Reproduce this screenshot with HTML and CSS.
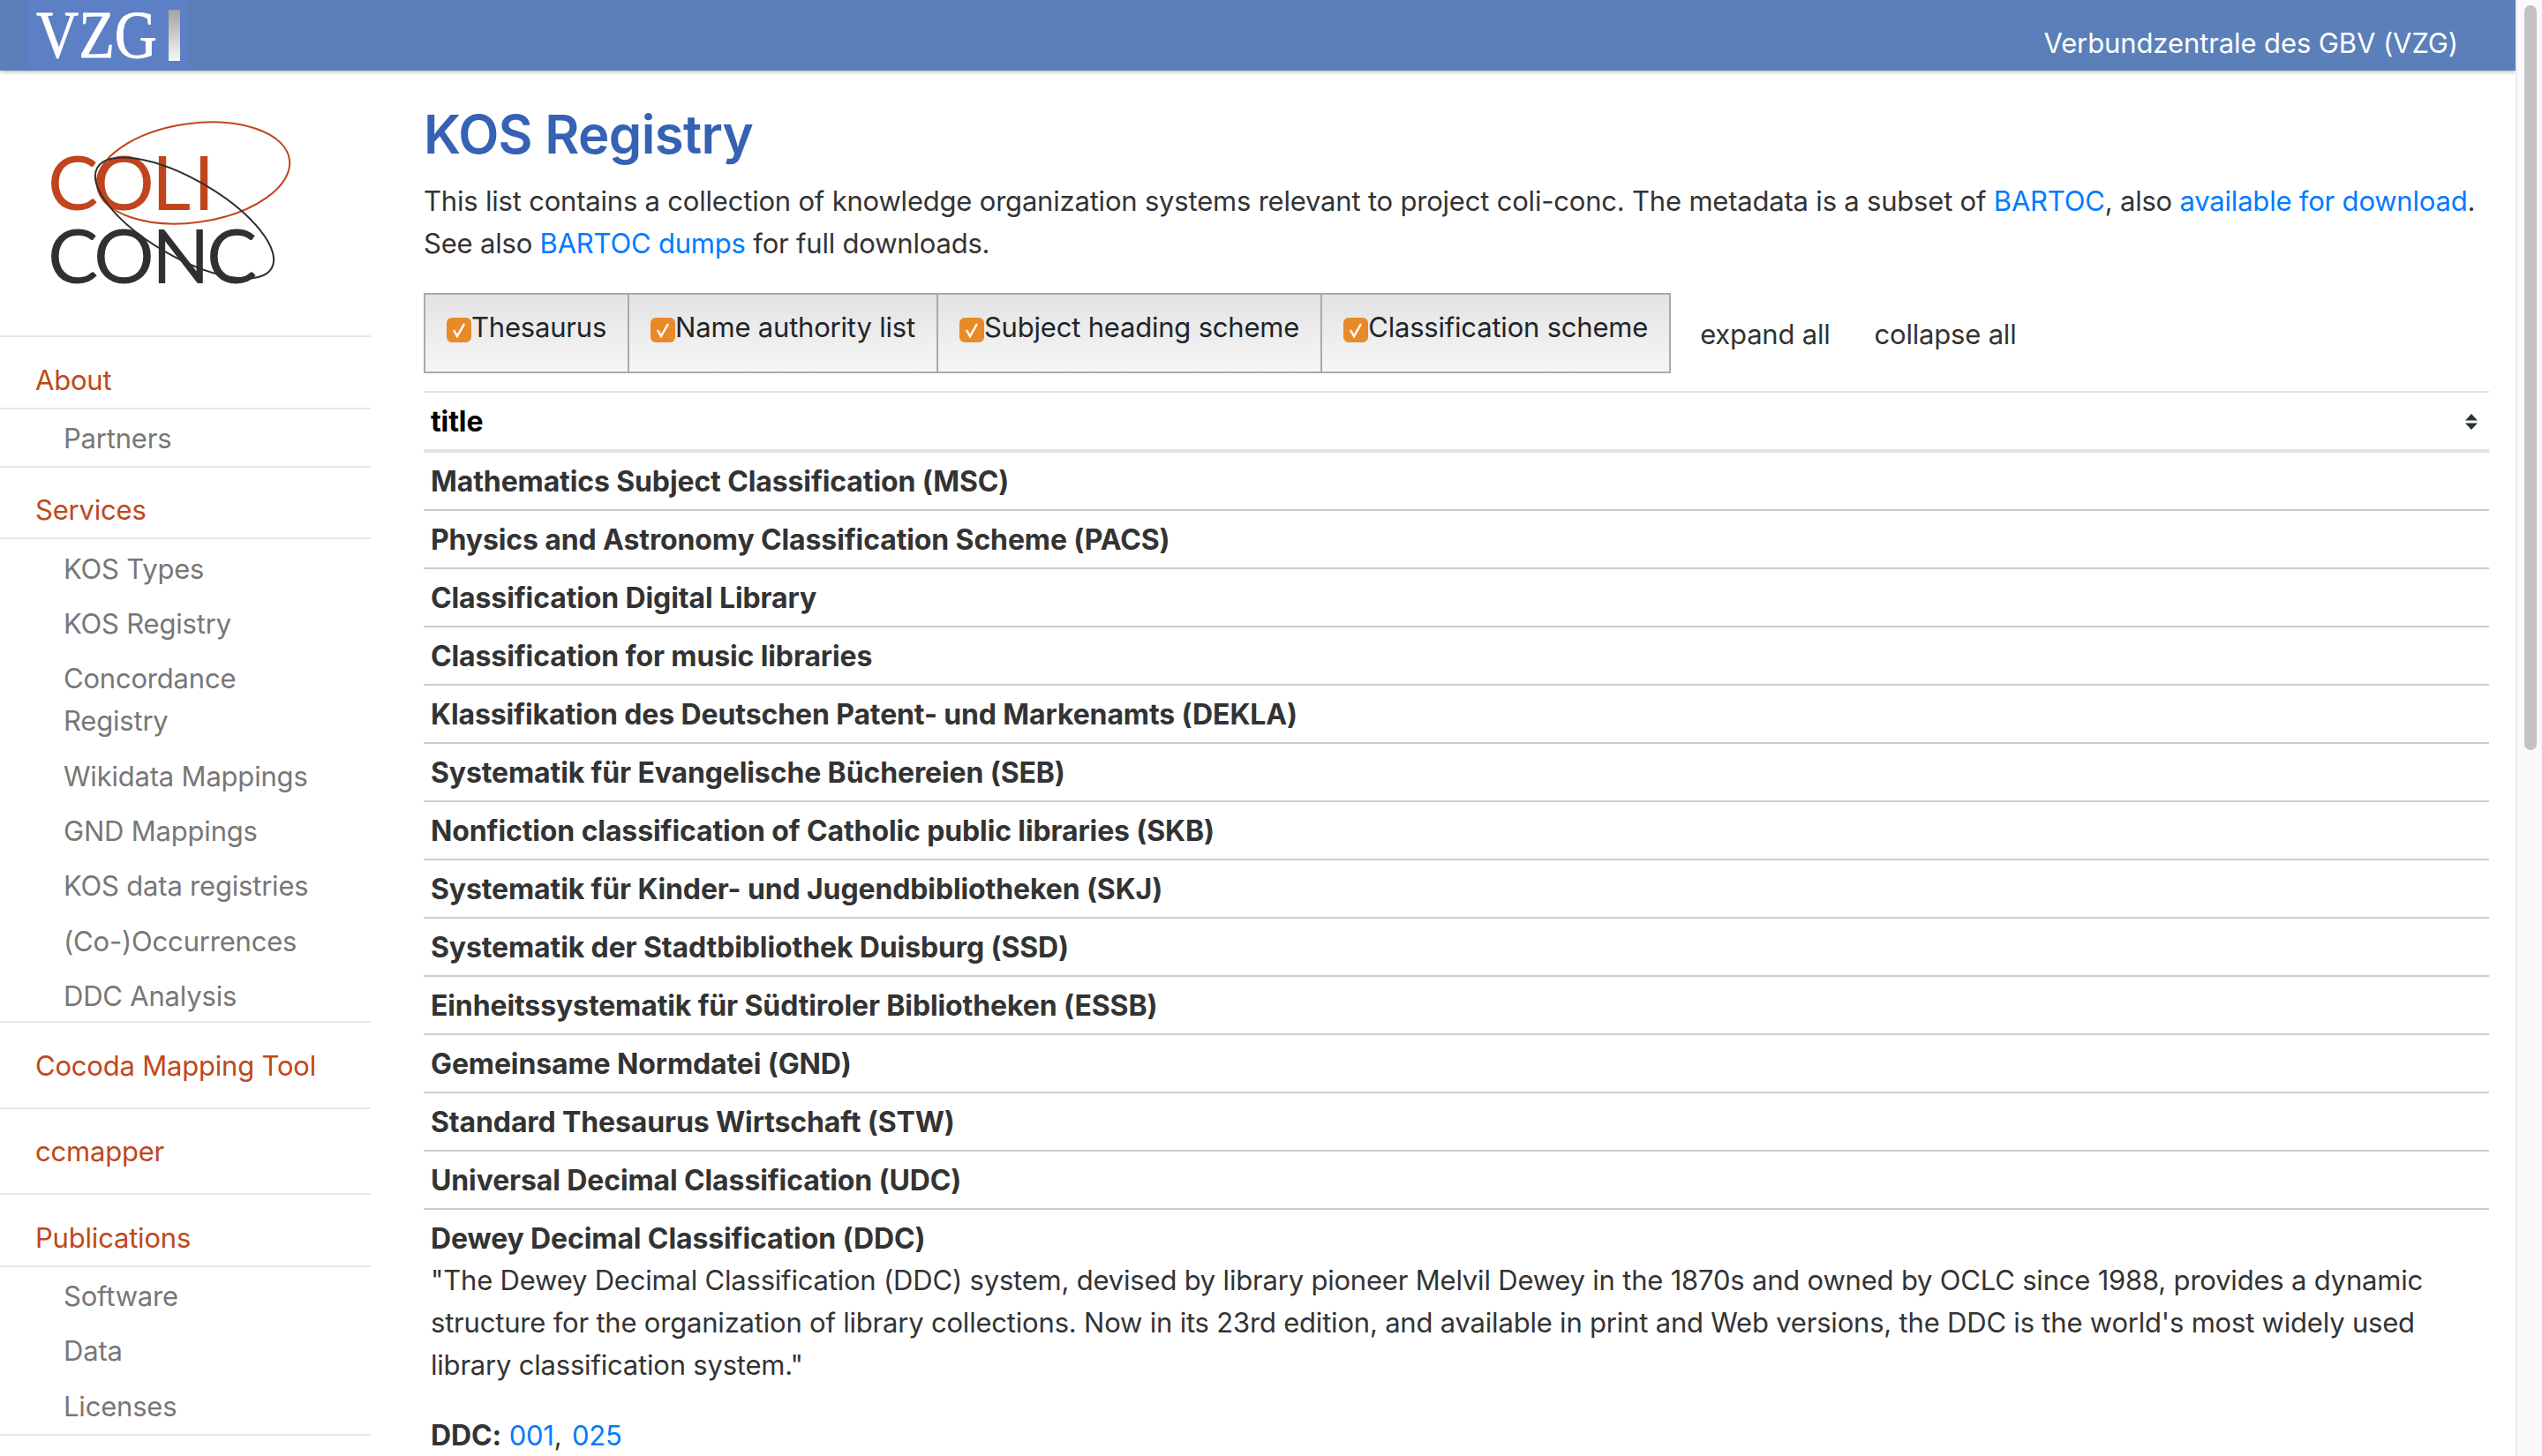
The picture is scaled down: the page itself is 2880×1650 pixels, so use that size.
FILE: index.html
```html
<!DOCTYPE html>
<html>
    <head>
        <title> KOS Registry </title>
        <link rel="stylesheet" href="styles.css">
    </head>
    <body>
        <div class="page">
            <header class="topbar">
                <a class="vzg-logo" href="#">
                    <svg width="181" height="80" viewBox="0 0 181 80">
                        <defs>
                            <linearGradient id="barfade" x1="0" y1="0" x2="0" y2="1">
                                <stop offset="0" stop-color="#a3a3a3"/>
                                <stop offset="1" stop-color="#f7f7f7"/>
                            </linearGradient>
                        </defs>
                        <text x="9" y="65" class="vzg-text" textLength="137" lengthAdjust="spacingAndGlyphs">VZG</text>
                        <rect x="159" y="11" width="13" height="58" fill="url(#barfade)"/>
                    </svg>
                </a>
                <span class="topbar-title">Verbundzentrale des GBV (VZG)</span>
            </header>

            <div class="columns">
                <nav class="sidebar">
                    <a class="coli-logo" href="#">
                        <svg width="420" height="300" viewBox="0 0 420 300">
                            <text x="54 106 172 219" y="158" class="coli-text">COLI</text>
                            <text x="54 106 172 234" y="241" class="conc-text">CONC</text>
                            <ellipse cx="219" cy="116" rx="110" ry="56" transform="rotate(-8 219 116)" class="ring-red"/>
                            <ellipse cx="209" cy="167" rx="114" ry="44" transform="rotate(30 209 167)" class="ring-dark"/>
                        </svg>
                    </a>

                    <div class="nav-section">
                        <a class="nav-head has-sub" href="#">About</a>
                        <ul class="nav-sub">
                            <li><a href="#">Partners</a></li>
                        </ul>
                    </div>
                    <div class="nav-section">
                        <a class="nav-head has-sub" href="#">Services</a>
                        <ul class="nav-sub nav-sub-long">
                            <li><a href="#">KOS Types</a></li>
                            <li><a href="#">KOS Registry</a></li>
                            <li><a href="#">Concordance Registry</a></li>
                            <li><a href="#">Wikidata Mappings</a></li>
                            <li><a href="#">GND Mappings</a></li>
                            <li><a href="#">KOS data registries</a></li>
                            <li><a href="#">(Co-)Occurrences</a></li>
                            <li><a href="#">DDC Analysis</a></li>
                        </ul>
                    </div>
                    <div class="nav-section">
                        <a class="nav-head" href="#">Cocoda Mapping Tool</a>
                    </div>
                    <div class="nav-section">
                        <a class="nav-head" href="#">ccmapper</a>
                    </div>
                    <div class="nav-section">
                        <a class="nav-head has-sub" href="#">Publications</a>
                        <ul class="nav-sub">
                            <li><a href="#">Software</a></li>
                            <li><a href="#">Data</a></li>
                            <li><a href="#">Licenses</a></li>
                        </ul>
                    </div>
                </nav>

                <main class="content">
                    <h1>KOS Registry</h1>
                    <p class="intro">This list contains a collection of knowledge organization systems relevant to project coli-conc. The metadata is a subset of <a href="#">BARTOC</a>, also <a href="#">available for download</a>. See also <a href="#">BARTOC dumps</a> for full downloads.</p>

                    <div class="toolbar">
                        <div class="filters">
                            <label class="filter"><span class="check"><svg width="28" height="28" viewBox="0 0 28 28"><path d="M8 14 L12 21 L20 7" class="tick"/></svg></span>Thesaurus</label>
                            <label class="filter"><span class="check"><svg width="28" height="28" viewBox="0 0 28 28"><path d="M8 14 L12 21 L20 7" class="tick"/></svg></span>Name authority list</label>
                            <label class="filter"><span class="check"><svg width="28" height="28" viewBox="0 0 28 28"><path d="M8 14 L12 21 L20 7" class="tick"/></svg></span>Subject heading scheme</label>
                            <label class="filter"><span class="check"><svg width="28" height="28" viewBox="0 0 28 28"><path d="M8 14 L12 21 L20 7" class="tick"/></svg></span>Classification scheme</label>
                        </div>
                        <a class="tool-link" href="#">expand all</a>
                        <a class="tool-link" href="#">collapse all</a>
                    </div>

                    <table class="kos-table">
                        <thead>
                            <tr>
                                <th>
                                    <div class="th-inner">
                                        title
                                        <svg width="16" height="18" viewBox="0 0 16 18"><path d="M8 0 L15 7.5 L1 7.5 Z M1 10.5 L15 10.5 L8 18 Z" fill="#2b3338"/></svg>
                                    </div>
                                </th>
                            </tr>
                        </thead>
                        <tbody>
                            <tr><td><b>Mathematics Subject Classification (MSC)</b></td></tr>
                            <tr><td><b>Physics and Astronomy Classification Scheme (PACS)</b></td></tr>
                            <tr><td><b>Classification Digital Library</b></td></tr>
                            <tr><td><b>Classification for music libraries</b></td></tr>
                            <tr><td><b>Klassifikation des Deutschen Patent- und Markenamts (DEKLA)</b></td></tr>
                            <tr><td><b>Systematik für Evangelische Büchereien (SEB)</b></td></tr>
                            <tr><td><b>Nonfiction classification of Catholic public libraries (SKB)</b></td></tr>
                            <tr><td><b>Systematik für Kinder- und Jugendbibliotheken (SKJ)</b></td></tr>
                            <tr><td><b>Systematik der Stadtbibliothek Duisburg (SSD)</b></td></tr>
                            <tr><td><b>Einheitssystematik für Südtiroler Bibliotheken (ESSB)</b></td></tr>
                            <tr><td><b>Gemeinsame Normdatei (GND)</b></td></tr>
                            <tr><td><b>Standard Thesaurus Wirtschaft (STW)</b></td></tr>
                            <tr><td><b>Universal Decimal Classification (UDC)</b></td></tr>
                            <tr>
                                <td>
                                    <b>Dewey Decimal Classification (DDC)</b>
                                    <p class="desc">"The Dewey Decimal Classification (DDC) system, devised by library pioneer Melvil Dewey in the 1870s and owned by OCLC since 1988, provides a dynamic structure for the organization of library collections. Now in its 23rd edition, and available in print and Web versions, the DDC is the world's most widely used library classification system."</p>
                                    <p class="desc-meta"><b>DDC:</b> <a href="#">001</a>, <a href="#">025</a></p>
                                </td>
                            </tr>
                        </tbody>
                    </table>
                </main>
            </div>
        </div>

        <div class="scrollbar"><div class="scroll-thumb"></div></div>
    </body>
</html>
```

FILE: styles.css
```css
html, body {
    height: 100%;
    margin: 0;
    overflow: hidden;
}

body {
    display: flex;
    font-family: Inter, "Noto Sans", sans-serif;
    font-size: 31px;
    letter-spacing: -0.2px;
    line-height: 48px;
    color: #333;
    background-color: #fff;
}

a {
    text-decoration: none;
    color: #007bff;
}

.page {
    flex: 1;
    min-width: 0;
    height: 100%;
    overflow: hidden;
}

/* top bar */
.topbar {
    display: flex;
    justify-content: space-between;
    align-items: center;
    height: 80px;
    padding: 0 65px 0 32px;
    background-color: #5a7fb9;
    box-shadow: 0 2px 4px rgba(0, 0, 0, 0.25);
    position: relative;
}

.vzg-logo {
    display: block;
    height: 80px;
    background-color: #5c7fc5;
}

.vzg-text {
    font-family: "Liberation Serif", serif;
    font-size: 76px;
    letter-spacing: 0;
    fill: #fff;
    stroke: #fff;
    stroke-width: 0.8;
}

.topbar-title {
    color: #fff;
    letter-spacing: -0.1px;
    padding-top: 17px;
}

.columns {
    display: flex;
}

/* sidebar */
.sidebar {
    flex: 0 0 420px;
    margin-right: 60px;
}

.coli-logo {
    display: block;
    height: 300px;
    border-bottom: 2px solid #e7e7e7;
}

.coli-text {
    font-family: Lato, sans-serif;
    font-size: 86px;
    letter-spacing: 0;
    fill: #c0451d;
}

.conc-text {
    font-family: Lato, sans-serif;
    font-size: 86px;
    letter-spacing: 0;
    fill: #2e3032;
}

.ring-red {
    fill: none;
    stroke: #c0451d;
    stroke-width: 2;
}

.ring-dark {
    fill: none;
    stroke: #2e3032;
    stroke-width: 2;
}

.nav-section {
    border-bottom: 2px solid #e7e7e7;
}

.nav-head {
    display: block;
    padding: 24.5px 0 23px 40px;
    color: #c0481a;
}

.nav-head.has-sub {
    padding-bottom: 7px;
    border-bottom: 2px solid #e7e7e7;
}

.nav-sub {
    list-style: none;
    margin: 0;
    padding: 2px 0 0;
}

.nav-sub li a {
    display: block;
    padding: 7.2px 40px 7.2px 72px;
    color: #777;
}

.nav-sub-long li:last-child a {
    padding-bottom: 4px;
}

/* main column */
.content {
    flex: 1;
    min-width: 0;
    padding-right: 30px;
}

h1 {
    margin: 36px 0 16px;
    font-size: 60px;
    line-height: 72px;
    font-weight: 600;
    letter-spacing: -0.7px;
    color: #3562b3;
}

.intro {
    margin: 0 0 32px;
}

.toolbar {
    display: flex;
    align-items: center;
}

.filters {
    display: flex;
    height: 91px;
    box-sizing: border-box;
    border: 2px solid #aaa;
    background: linear-gradient(#e3e3e3, #f6f6f6);
    margin-right: 33px;
}

.filter {
    display: flex;
    align-items: flex-start;
    padding: 13px 24px 0;
    border-left: 2px solid #aaa;
    color: #212529;
}

.filter:first-child {
    border-left: none;
}

.check {
    display: block;
    width: 28px;
    height: 28px;
    margin-top: 13px;
    border-radius: 6px;
    background-color: #e98a28;
}

.check svg {
    display: block;
}

.tick {
    fill: none;
    stroke: #fff;
    stroke-width: 2.5;
}

.tool-link {
    color: #333;
    margin-right: 50px;
    padding-top: 3px;
}

.kos-table {
    width: 100%;
    margin-top: 20px;
    border-spacing: 0;
}

.kos-table th {
    padding: 9px 8px 7px;
    text-align: left;
    color: #000;
    font-size: 32px;
    font-weight: 700;
    letter-spacing: -0.12px;
    border-top: 2px solid #dee2e6;
    border-bottom: 4px solid #dee2e6;
}

.th-inner {
    display: flex;
    justify-content: space-between;
    align-items: center;
    padding-right: 4px;
}

.kos-table td {
    padding: 9px 8px 7px;
    border-bottom: 2px solid #ccc;
}

.kos-table td b {
    font-size: 32px;
    font-weight: 700;
    letter-spacing: -0.12px;
}

.desc {
    margin: -1px 0 32px;
}

.desc-meta {
    margin: 0;
}

.desc-meta a + a {
    margin-left: 3px;
}

/* fake scrollbar */
.scrollbar {
    flex: 0 0 30px;
    height: 100%;
    box-sizing: border-box;
    background-color: #fafafa;
    border-left: 2px solid #ececec;
    padding: 6px 6px 0 8px;
}

.scroll-thumb {
    height: 844px;
    border-radius: 8px;
    background-color: #c2c2c2;
}
```
